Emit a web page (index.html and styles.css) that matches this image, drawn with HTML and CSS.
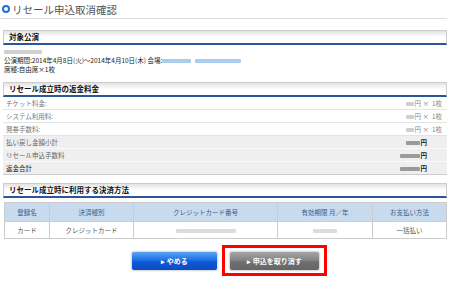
FILE: index.html
```html
<!doctype html>
<html lang="ja">
<head>
    <meta charset="UTF-8">
    <title>リセール申込取消確認</title>
    <link rel="stylesheet" href="styles.css">
</head>
<body>

<div class="page">
    <h1 class="title"><span class="ring"></span>リセール申込取消確認</h1>

    <div class="sec first">
        <h2 class="sec-head">対象公演</h2>
        <div class="info">
            <p><span class="blur g w38"></span></p>
            <p>公演期間:2014年4月8日(火)～2014年4月10日(木) 会場:<span class="blur b w29"></span><span class="blur b w46 ml4"></span></p>
            <p>席種:自由席×1枚</p>
        </div>
    </div>

    <div class="sec">
        <h2 class="sec-head">リセール成立時の返金料金</h2>
        <ul class="fee">
            <li><span>チケット料金:</span><span class="val"><span class="blur g w8"></span>円 ×&nbsp; 1枚</span></li>
            <li><span>システム利用料:</span><span class="val"><span class="blur g w8"></span>円 ×&nbsp; 1枚</span></li>
            <li><span>発券手数料:</span><span class="val"><span class="blur g w8"></span>円 ×&nbsp; 1枚</span></li>
            <li class="sum"><span>払い戻し金額小計</span><span class="val"><span class="blur d w14"></span>円</span></li>
            <li class="sum"><span>リセール申込手数料</span><span class="val"><span class="blur d w20"></span>円</span></li>
            <li class="sum total"><span>返金合計</span><span class="val"><span class="blur d w20"></span>円</span></li>
        </ul>
    </div>

    <div class="sec">
        <h2 class="sec-head">リセール成立時に利用する決済方法</h2>
        <table class="pay">
            <tr>
                <th class="c1">登録名</th>
                <th class="c2">決済種別</th>
                <th class="c3">クレジットカード番号</th>
                <th class="c4">有効期限 月／年</th>
                <th class="c5">お支払い方法</th>
            </tr>
            <tr>
                <td>カード</td>
                <td>クレジットカード</td>
                <td><span class="blur l w60"></span></td>
                <td><span class="blur l w24"></span></td>
                <td>一括払い</td>
            </tr>
        </table>
    </div>

    <div class="btns">
        <button class="btn blue">▸ やめる</button>
        <div class="mark">
            <button class="btn gray">▸ 申込を取り消す</button>
        </div>
    </div>
</div>

</body>
</html>
```

FILE: styles.css
```css
body{
    margin: 0;
    background-color: #fff;
    color: #333;
    font-family: "Noto Sans CJK JP", "Liberation Sans", sans-serif;
}
p{
    margin: 0;
}
ul{
    margin: 0;
    padding: 0;
    list-style: none;
}
.page{
    width: 447px;
}

/* title */
.title{
    margin: 0;
    height: 18px;
    padding-left: 2px;
    border-bottom: 1px solid #ddd;
    display: flex;
    align-items: center;
    font-size: 10.5px;
    font-weight: normal;
    letter-spacing: 0;
    color: #555;
}
.ring{
    width: 4px;
    height: 4px;
    border: 2px solid #1a73d9;
    border-radius: 50%;
    margin-right: 2px;
}

/* section head */
.sec{
    margin-top: 8px;
}
.sec.first{
    margin-top: 11px;
}
.sec-head{
    margin: 0 0 0 3px;
    height: 12px;
    line-height: 12px;
    padding-left: 5px;
    border: 1px solid #ccc;
    border-bottom: 2px solid #2c5796;
    background: linear-gradient(#e2e2e2, #fff 50%);
    font-size: 7.5px;
    font-weight: bold;
    color: #111;
}

/* show info */
.info{
    padding: 2px 0 0 4px;
    font-size: 6.5px;
    line-height: 9px;
    color: #222;
}

/* blurred values */
.blur{
    display: inline-block;
    height: 4px;
    vertical-align: middle;
    border-radius: 1px;
}
.blur.g{ background-color: #d0d0d0; }
.blur.d{ background-color: #9a9a9a; }
.blur.l{ background-color: #dcdcdc; }
.blur.b{ background-color: #a9cdee; }
.w8{ width: 8px; }
.w14{ width: 14px; }
.w20{ width: 20px; }
.w24{ width: 24px; }
.w29{ width: 29px; }
.w38{ width: 38px; }
.w46{ width: 46px; }
.w60{ width: 60px; }
.ml4{ margin-left: 4px; }

/* fee list */
.fee{
    margin: 0 0 0 3px;
    font-size: 6.5px;
    color: #777;
}
.fee li{
    height: 12px;
    border-bottom: 1px solid #e4e4e4;
    display: flex;
    align-items: center;
    justify-content: space-between;
    padding: 0 5px 0 3px;
}
.fee .val{
    color: #888;
}
.fee .val .blur{
    margin-right: 1px;
}
.fee li.sum{
    background-color: #efefef;
    border-bottom-color: #fafafa;
    padding-right: 20px;
    color: #666;
}
.fee li.sum .val{
    color: #222;
    font-weight: bold;
}
.fee li.total{
    color: #222;
    border-bottom-color: #ccc;
}

/* payment table */
.pay{
    margin: 4px 0 0 4px;
    width: 443px;
    border-collapse: collapse;
    font-size: 6.5px;
    text-align: center;
}
.pay th,
.pay td{
    border: 1px solid #ccc;
    padding: 0;
}
.pay th{
    height: 18px;
    background-color: #c8dbee;
    color: #3d5d86;
    font-weight: normal;
}
.pay td{
    height: 16px;
    color: #555;
}
.c1{ width: 44px; }
.c2{ width: 83px; }
.c3{ width: 143px; }
.c4{ width: 94px; }

/* buttons */
.btns{
    margin-top: 6px;
    padding-left: 11px;
    display: flex;
    justify-content: center;
    align-items: center;
    gap: 4px;
}
.btn{
    height: 20px;
    border: 1px solid #ddd;
    border-radius: 3px;
    color: #fff;
    font-family: inherit;
    font-size: 7px;
    font-weight: bold;
    padding: 0;
    box-shadow: 0 0 1px #999;
}
.btn.blue{
    width: 87px;
    background: linear-gradient(#5aa5f4, #1d6fe6 45%, #0f58d6 55%, #0a4cc2);
}
.btn.gray{
    width: 91px;
    background: linear-gradient(#a5a5a5, #848484 45%, #6f6f6f 55%, #666);
}
.mark{
    border: 3px solid #f00;
    padding: 3px 4px 2px;
    display: flex;
}
```
